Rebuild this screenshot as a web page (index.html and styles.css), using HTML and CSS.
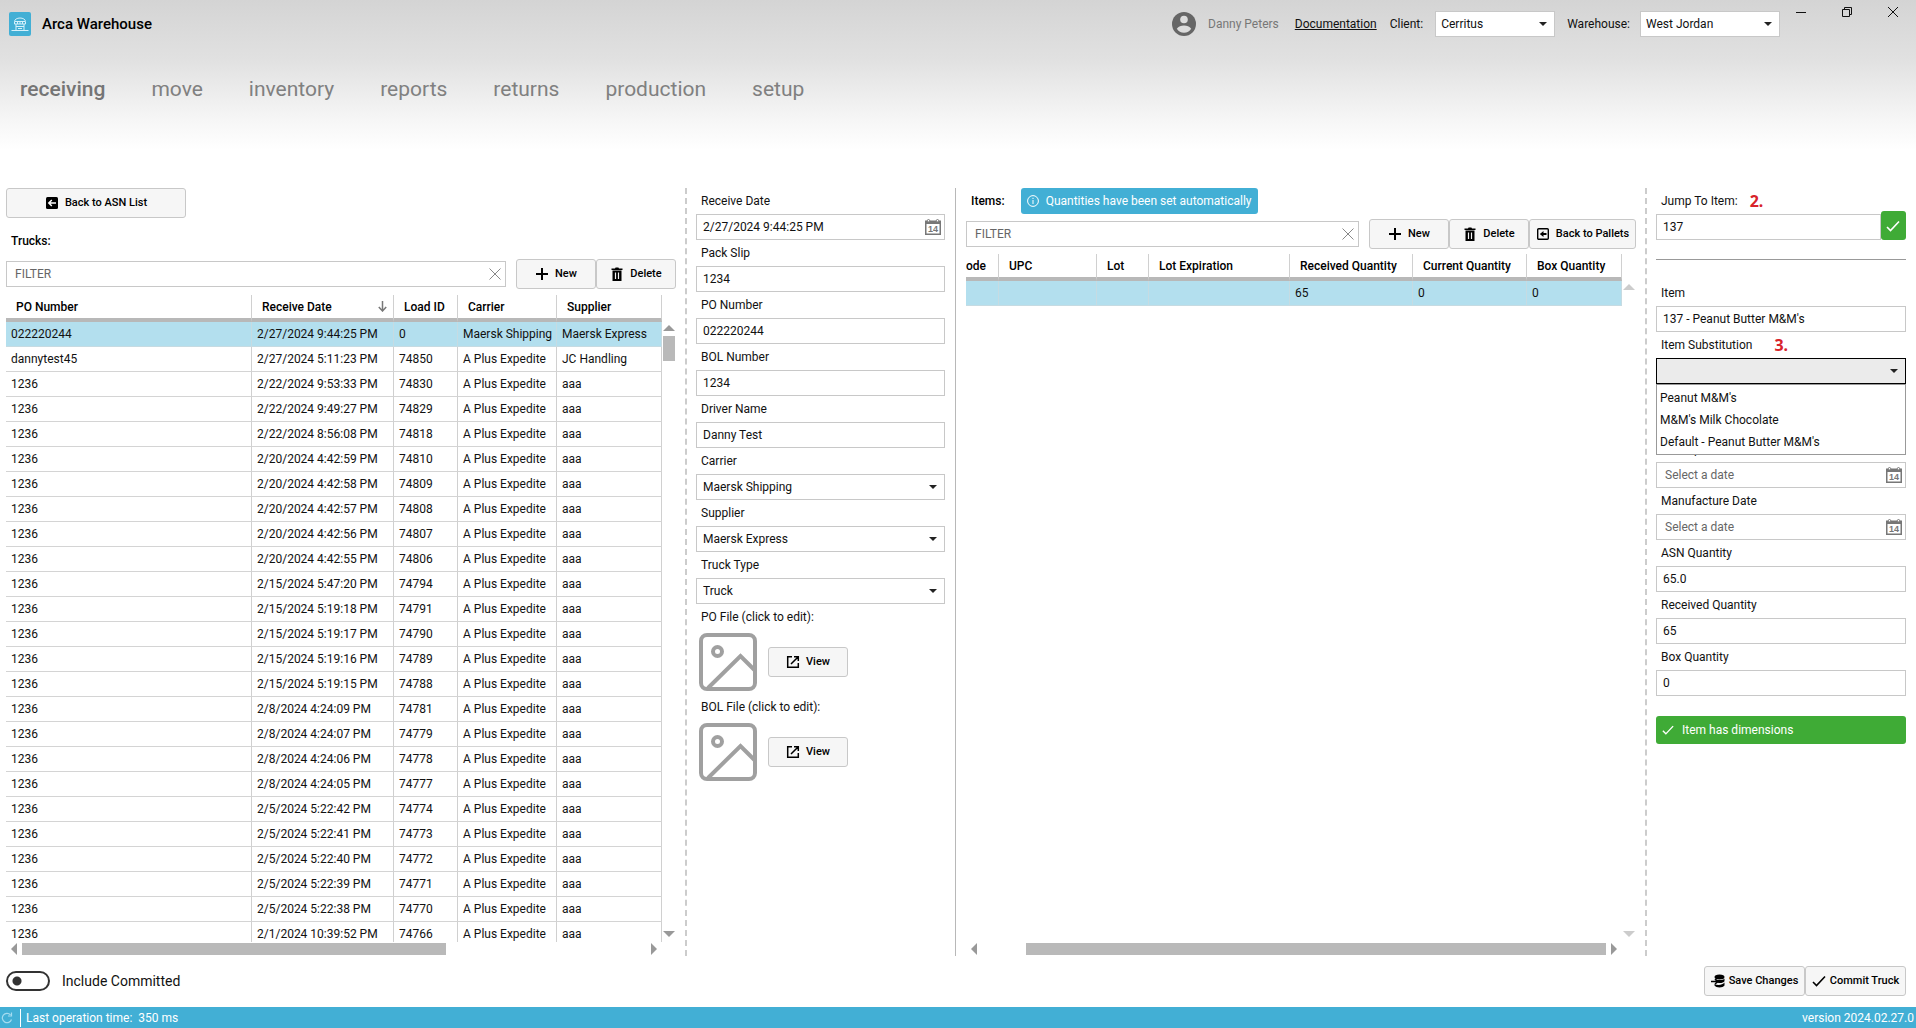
FILE: index.html
```html
<!DOCTYPE html>
<html lang="en">
<head>
<meta charset="utf-8">
<title>Arca Warehouse</title>
<link rel="stylesheet" href="styles.css">
</head>
<body>
<svg class="defs" aria-hidden="true">
  <symbol id="plus" viewBox="0 0 14 14"><path d="M7 1v12M1 7h12" stroke="currentColor" stroke-width="2" fill="none"/></symbol>
  <symbol id="trash" viewBox="0 0 14 14"><path d="M1.500 1.500H5L5.600.5h2.800l.6 1h3.500V3h-11zM2.500 3.500h9V14h-9z" fill="currentColor"/><path d="M5.500 5.500v6.500M8.500 5.500v6.500" stroke="#f5f5f5" stroke-width="1.200"/></symbol>
  <symbol id="clear" viewBox="0 0 12 12"><path d="M.5.5l11 11M11.500.5l-11 11" stroke="currentColor" fill="none"/></symbol>
  <symbol id="cal" viewBox="0 0 16 16"><path d="M.75 3.500h14.500v11.750H.75z" fill="none" stroke="currentColor" stroke-width="1.500"/><path d="M0 1.500h16V5H0z" fill="currentColor"/><circle cx="3.500" cy="1.700" r="1.200" fill="#fff" stroke="currentColor"/><circle cx="12.500" cy="1.700" r="1.200" fill="#fff" stroke="currentColor"/><text x="8" y="13" text-anchor="middle" font-size="9" font-weight="700" font-family="Liberation Sans, sans-serif" fill="currentColor">14</text></symbol>
  <symbol id="image" viewBox="0 0 58 58"><rect x="2" y="2" width="54" height="54" rx="6" fill="none" stroke="currentColor" stroke-width="4"/><circle cx="18.500" cy="18.500" r="4.500" fill="none" stroke="currentColor" stroke-width="4"/><path d="M9 55L41.500 23 56 37.500" fill="none" stroke="currentColor" stroke-width="4"/></symbol>
  <symbol id="open" viewBox="0 0 14 14"><path d="M6 1.700H1.700v10.600h10.600V8M8 1.700h4.300V6M12.300 1.700L5 9" fill="none" stroke="currentColor" stroke-width="1.500"/></symbol>
  <symbol id="check" viewBox="0 0 14 14"><path d="M1 8l3.500 3.500L13 2.500" fill="none" stroke="currentColor" stroke-width="1.600"/></symbol>
</svg>

<header class="top">
  <div class="titlebar">
    <svg class="logo" viewBox="0 0 22 24"><rect width="22" height="24" rx="2" fill="#42afd5"/><path d="M5.500 12V9.500a5.500 3.500 0 0 1 11 0V12zM6 9.500h10M8.500 9.500V12M11 9.500V12M13.500 9.500V12M7 12v6M15 12v6M7 14.500h8M9 16.500h4M2.500 18.500h17" fill="none" stroke="#d6f1fb" stroke-width="1"/></svg>
    <h1 class="app-name">Arca Warehouse</h1>
    <svg class="avatar" viewBox="0 0 24 24"><circle cx="12" cy="12" r="12" fill="#666"/><circle cx="12" cy="7.500" r="3.800" fill="#dcdcdc"/><path d="M4.800 16.800C6.500 14.400 9 13.600 12 13.600s5.500.8 7.200 3.200A8.700 8.700 0 0 1 12 20.700a8.700 8.700 0 0 1-7.200-3.900z" fill="#dcdcdc"/></svg>
    <span class="user">Danny Peters</span>
    <a class="docs" href="#docs">Documentation</a>
    <label for="client">Client:</label>
    <div class="select client"><select id="client"><option>Cerritus</option></select></div>
    <label for="warehouse">Warehouse:</label>
    <div class="select warehouse"><select id="warehouse"><option>West Jordan</option></select></div>
    <div class="window-buttons">
      <button type="button" aria-label="Minimize"><svg viewBox="0 0 12 12"><path d="M1 6.500h10" stroke="#111"/></svg></button>
      <button type="button" aria-label="Restore"><svg viewBox="0 0 12 12"><path d="M1.500 3.500h7v7h-7zM3.500 3.500v-2h7v7h-2" fill="none" stroke="#111"/></svg></button>
      <button type="button" aria-label="Close"><svg viewBox="0 0 12 12"><path d="M1 1l10 10M11 1L1 11" stroke="#111"/></svg></button>
    </div>
  </div>
  <nav class="nav">
    <a class="active" href="#receiving">receiving</a>
    <a href="#move">move</a>
    <a href="#inventory">inventory</a>
    <a href="#reports">reports</a>
    <a href="#returns">returns</a>
    <a href="#production">production</a>
    <a href="#setup">setup</a>
  </nav>
</header>

<main class="panels">
  <section class="trucks">
    <button class="btn back" type="button"><svg class="icon" viewBox="0 0 14 14"><rect x="1" y="1" width="12" height="12" rx="1.500"/><path d="M11 7H4M6.800 4L3.800 7l3 3" fill="none" stroke="#fff" stroke-width="1.500"/></svg>Back to ASN List</button>
    <h2 class="section-title">Trucks:</h2>
    <div class="toolbar">
      <div class="filter"><input type="text" placeholder="FILTER" aria-label="Filter trucks"><svg class="clear"><use href="#clear"/></svg></div>
      <div class="buttons">
        <button class="btn" type="button"><svg class="icon"><use href="#plus"/></svg>New</button>
        <button class="btn" type="button"><svg class="icon"><use href="#trash"/></svg>Delete</button>
      </div>
    </div>
    <div class="grid">
      <div class="viewport">
        <table>
          <colgroup><col><col class="w-date"><col class="w-load"><col class="w-carrier"><col class="w-supplier"></colgroup>
          <thead><tr><th>PO Number</th><th><span class="sorted">Receive Date<svg class="sort" viewBox="0 0 9 11"><path d="M4.500 0v10M.8 6l3.700 4 3.700-4" fill="none" stroke="#777" stroke-width="1.500"/></svg></span></th><th>Load ID</th><th>Carrier</th><th>Supplier</th></tr></thead>
          <tbody>
            <tr class="selected"><td>022220244</td><td>2/27/2024 9:44:25 PM</td><td>0</td><td>Maersk Shipping</td><td>Maersk Express</td></tr>
            <tr><td>dannytest45</td><td>2/27/2024 5:11:23 PM</td><td>74850</td><td>A Plus Expedite</td><td>JC Handling</td></tr>
            <tr><td>1236</td><td>2/22/2024 9:53:33 PM</td><td>74830</td><td>A Plus Expedite</td><td>aaa</td></tr>
            <tr><td>1236</td><td>2/22/2024 9:49:27 PM</td><td>74829</td><td>A Plus Expedite</td><td>aaa</td></tr>
            <tr><td>1236</td><td>2/22/2024 8:56:08 PM</td><td>74818</td><td>A Plus Expedite</td><td>aaa</td></tr>
            <tr><td>1236</td><td>2/20/2024 4:42:59 PM</td><td>74810</td><td>A Plus Expedite</td><td>aaa</td></tr>
            <tr><td>1236</td><td>2/20/2024 4:42:58 PM</td><td>74809</td><td>A Plus Expedite</td><td>aaa</td></tr>
            <tr><td>1236</td><td>2/20/2024 4:42:57 PM</td><td>74808</td><td>A Plus Expedite</td><td>aaa</td></tr>
            <tr><td>1236</td><td>2/20/2024 4:42:56 PM</td><td>74807</td><td>A Plus Expedite</td><td>aaa</td></tr>
            <tr><td>1236</td><td>2/20/2024 4:42:55 PM</td><td>74806</td><td>A Plus Expedite</td><td>aaa</td></tr>
            <tr><td>1236</td><td>2/15/2024 5:47:20 PM</td><td>74794</td><td>A Plus Expedite</td><td>aaa</td></tr>
            <tr><td>1236</td><td>2/15/2024 5:19:18 PM</td><td>74791</td><td>A Plus Expedite</td><td>aaa</td></tr>
            <tr><td>1236</td><td>2/15/2024 5:19:17 PM</td><td>74790</td><td>A Plus Expedite</td><td>aaa</td></tr>
            <tr><td>1236</td><td>2/15/2024 5:19:16 PM</td><td>74789</td><td>A Plus Expedite</td><td>aaa</td></tr>
            <tr><td>1236</td><td>2/15/2024 5:19:15 PM</td><td>74788</td><td>A Plus Expedite</td><td>aaa</td></tr>
            <tr><td>1236</td><td>2/8/2024 4:24:09 PM</td><td>74781</td><td>A Plus Expedite</td><td>aaa</td></tr>
            <tr><td>1236</td><td>2/8/2024 4:24:07 PM</td><td>74779</td><td>A Plus Expedite</td><td>aaa</td></tr>
            <tr><td>1236</td><td>2/8/2024 4:24:06 PM</td><td>74778</td><td>A Plus Expedite</td><td>aaa</td></tr>
            <tr><td>1236</td><td>2/8/2024 4:24:05 PM</td><td>74777</td><td>A Plus Expedite</td><td>aaa</td></tr>
            <tr><td>1236</td><td>2/5/2024 5:22:42 PM</td><td>74774</td><td>A Plus Expedite</td><td>aaa</td></tr>
            <tr><td>1236</td><td>2/5/2024 5:22:41 PM</td><td>74773</td><td>A Plus Expedite</td><td>aaa</td></tr>
            <tr><td>1236</td><td>2/5/2024 5:22:40 PM</td><td>74772</td><td>A Plus Expedite</td><td>aaa</td></tr>
            <tr><td>1236</td><td>2/5/2024 5:22:39 PM</td><td>74771</td><td>A Plus Expedite</td><td>aaa</td></tr>
            <tr><td>1236</td><td>2/5/2024 5:22:38 PM</td><td>74770</td><td>A Plus Expedite</td><td>aaa</td></tr>
            <tr><td>1236</td><td>2/1/2024 10:39:52 PM</td><td>74766</td><td>A Plus Expedite</td><td>aaa</td></tr>
          </tbody>
        </table>
      </div>
      <div class="vbar"><i class="arrow up"></i><i class="thumb"></i><i class="arrow down"></i></div>
      <div class="hbar"><i class="arrow left"></i><div class="track"><i class="thumb trucks-thumb"></i></div><i class="arrow right"></i></div>
    </div>
  </section>

  <section class="form details">
    <label for="rdate">Receive Date</label>
    <div class="date"><input id="rdate" type="text" value="2/27/2024 9:44:25 PM"><svg class="cal"><use href="#cal"/></svg></div>
    <label for="slip">Pack Slip</label>
    <input id="slip" type="text" value="1234">
    <label for="po">PO Number</label>
    <input id="po" type="text" value="022220244">
    <label for="bol">BOL Number</label>
    <input id="bol" type="text" value="1234">
    <label for="driver">Driver Name</label>
    <input id="driver" type="text" value="Danny Test">
    <label for="carrier">Carrier</label>
    <div class="select"><select id="carrier"><option>Maersk Shipping</option></select></div>
    <label for="supplier">Supplier</label>
    <div class="select"><select id="supplier"><option>Maersk Express</option></select></div>
    <label for="ttype">Truck Type</label>
    <div class="select"><select id="ttype"><option>Truck</option></select></div>
    <div class="file">
      <span class="caption">PO File (click to edit):</span>
      <div class="file-row"><button class="picture" type="button" aria-label="Edit PO file"><svg><use href="#image"/></svg></button><button class="btn" type="button"><svg class="icon"><use href="#open"/></svg>View</button></div>
    </div>
    <div class="file">
      <span class="caption">BOL File (click to edit):</span>
      <div class="file-row"><button class="picture" type="button" aria-label="Edit BOL file"><svg><use href="#image"/></svg></button><button class="btn" type="button"><svg class="icon"><use href="#open"/></svg>View</button></div>
    </div>
  </section>

  <section class="items">
    <div class="items-head">
      <h2 class="section-title">Items:</h2>
      <div class="notice"><svg viewBox="0 0 12 12"><circle cx="6" cy="6" r="5.400" fill="none" stroke="#fff"/><path d="M6 5v4M6 2.800v1.200" stroke="#fff"/></svg>Quantities have been set automatically</div>
    </div>
    <div class="toolbar">
      <div class="filter"><input type="text" placeholder="FILTER" aria-label="Filter items"><svg class="clear"><use href="#clear"/></svg></div>
      <div class="buttons">
        <button class="btn" type="button"><svg class="icon"><use href="#plus"/></svg>New</button>
        <button class="btn" type="button"><svg class="icon"><use href="#trash"/></svg>Delete</button>
        <button class="btn pallets" type="button"><svg class="icon" viewBox="0 0 14 14"><rect x="1.700" y="1.700" width="10.600" height="10.600" rx="1" fill="none" stroke="#000" stroke-width="1.400"/><path d="M10.500 7H7" stroke="#000" stroke-width="2"/><path d="M3.800 7l3.700-3v6z"/></svg>Back to Pallets</button>
      </div>
    </div>
    <div class="grid">
      <div class="viewport">
        <table>
          <colgroup><col class="w-code"><col><col class="w-lot"><col class="w-exp"><col class="w-recv"><col class="w-cur"><col class="w-box"></colgroup>
          <thead><tr><th class="cut">ode</th><th>UPC</th><th>Lot</th><th>Lot Expiration</th><th>Received Quantity</th><th>Current Quantity</th><th>Box Quantity</th></tr></thead>
          <tbody><tr class="selected"><td></td><td></td><td></td><td></td><td>65</td><td>0</td><td>0</td></tr></tbody>
        </table>
      </div>
      <div class="vbar idle"><i class="arrow up"></i><i class="arrow down"></i></div>
      <div class="hbar"><i class="arrow left"></i><div class="track"><i class="thumb items-thumb"></i></div><i class="arrow right"></i></div>
    </div>
  </section>

  <section class="form item">
    <label for="jump">Jump To Item:<b class="step">2.</b></label>
    <div class="jump"><input id="jump" type="text" value="137"><button type="button" aria-label="Go"><svg><use href="#check"/></svg></button></div>
    <hr>
    <label for="item">Item</label>
    <input id="item" type="text" value="137 - Peanut Butter M&amp;M's">
    <label for="sub">Item Substitution<b class="step wide">3.</b></label>
    <div class="select open"><select id="sub"><option></option></select>
      <ul class="menu"><li>Peanut M&amp;M's</li><li>M&amp;M's Milk Chocolate</li><li>Default - Peanut Butter M&amp;M's</li></ul>
    </div>
    <label class="after-menu" for="exp">Lot Expiration</label>
    <div class="date"><input id="exp" type="text" placeholder="Select a date"><svg class="cal"><use href="#cal"/></svg></div>
    <label for="mfg">Manufacture Date</label>
    <div class="date"><input id="mfg" type="text" placeholder="Select a date"><svg class="cal"><use href="#cal"/></svg></div>
    <label for="asn">ASN Quantity</label>
    <input id="asn" type="text" value="65.0">
    <label for="recv">Received Quantity</label>
    <input id="recv" type="text" value="65">
    <label for="box">Box Quantity</label>
    <input id="box" type="text" value="0">
    <div class="ok"><svg><use href="#check"/></svg>Item has dimensions</div>
  </section>
</main>

<div class="actions">
  <label class="toggle"><input type="checkbox">Include Committed</label>
  <div class="buttons">
    <button class="btn save" type="button"><svg class="icon" viewBox="0 0 14 14"><ellipse cx="8.500" cy="3" rx="5" ry="2.500"/><path d="M3.500 4.500c1 2 9 2 10 0v2.700c-1 2-6 2.300-8 1zM13.500 8.500v3c-1.500 2.500-8.500 2.500-10 0v-1.500c3 1.500 8 1.200 10-1.500z"/><path d="M0 7.500h6M4 5l3 2.500L4 10" fill="none" stroke="#000" stroke-width="1.500"/></svg>Save Changes</button>
    <button class="btn commit" type="button"><svg class="icon"><use href="#check"/></svg>Commit Truck</button>
  </div>
</div>

<footer class="status">
  <svg class="refresh" viewBox="0 0 12 12"><path d="M10.500 7.500A4.700 4.700 0 1 1 9.500 2.800M10.500.5v3.500H7" fill="none" stroke="#a5dcf0" stroke-width="1.200"/></svg>
  <span class="time">Last operation time:&nbsp; 350 ms</span>
  <span class="version">version 2024.02.27.0</span>
</footer>
</body>
</html>
```

FILE: styles.css
```css
* { box-sizing: border-box; }
body {
  margin: 0;
  height: 100vh;
  display: flex;
  flex-direction: column;
  background: #fff;
  color: #111;
  font: 12px/16px Roboto, "Noto Sans", sans-serif;
}
input, select, button { font: inherit; color: inherit; margin: 0; }
i { display: block; }
.defs { display: none; }

/* Title bar and navigation */
.top {
  height: 188px;
  flex: none;
  background: linear-gradient(#d4d4d4, #e1e1e1 60px, #f6f6f6 120px, #fff 150px);
}
.titlebar { display: flex; align-items: center; height: 47px; padding-left: 9px; }
.logo { width: 22px; height: 24px; }
.app-name { margin: 0 auto 0 11px; font-size: 15px; line-height: 20px; font-weight: 500; color: #000; }
.avatar { width: 24px; height: 24px; margin-right: 12px; }
.user { color: #777; }
.docs { margin: 0 13px 0 16px; color: #111; }
.client { width: 120px; margin: 0 12px; }
.warehouse { width: 140px; margin-left: 10px; }
.window-buttons { display: flex; align-self: flex-start; margin-left: -2px; }
.window-buttons button { width: 46px; height: 24px; padding: 6px 17px; border: 0; background: none; }
.window-buttons svg { display: block; width: 12px; height: 12px; }
.nav { display: flex; gap: 46px; padding: 30px 20px; }
.nav a { font-size: 21px; line-height: 24px; color: #808080; text-decoration: none; }
.nav .active { font-weight: 500; color: #757575; }

/* Controls */
input[type="text"], select {
  width: 100%;
  height: 26px;
  padding: 0 6px;
  border: 1px solid #c8c8c8;
  border-radius: 0;
  background: #fff;
  appearance: none;
  outline: none;
}
.titlebar select { padding: 0 5px; }
input::placeholder { color: #666; opacity: 1; }
.filter input, .date input:placeholder-shown { padding: 0 8px; }
.select { position: relative; }
.select::after {
  content: "";
  position: absolute;
  top: 11px;
  right: 8px;
  border: solid transparent;
  border-width: 4px 4px 0;
  border-top-color: #222;
}
.btn {
  display: flex;
  align-items: center;
  justify-content: center;
  gap: 6px;
  width: 80px;
  height: 30px;
  padding: 0;
  border: 1px solid #c8c8c8;
  border-radius: 3px;
  background: #f6f6f6;
  color: #000;
  font-size: 11px;
  font-weight: 500;
  white-space: nowrap;
}
.icon { width: 14px; height: 14px; flex: none; }
.buttons { display: flex; }
.section-title { margin: 0; font-size: 12px; line-height: 16px; font-weight: 500; color: #000; }

/* Panels */
.panels {
  flex: 1;
  min-height: 0;
  margin-bottom: 10px;
  display: grid;
  grid-template-columns: minmax(0, 685fr) 271px minmax(0, 689fr) 271px;
}
.trucks { display: flex; flex-direction: column; min-height: 0; padding: 0 9px 0 6px; }
.back { width: 180px; margin-bottom: 15px; }
.trucks .section-title { padding-left: 5px; }
.trucks .toolbar { margin: 10px 0 6px; }
.toolbar { display: flex; align-items: center; gap: 10px; }
.filter { position: relative; flex: 1; }
.filter svg { position: absolute; right: 5px; top: 7px; width: 12px; height: 12px; color: #888; }

/* Data grids */
.grid { flex: 1; min-height: 0; display: grid; grid-template: minmax(0, 1fr) 14px / minmax(0, 1fr) 14px; }
.viewport { overflow: hidden; }
table { width: 100%; table-layout: fixed; border-collapse: separate; border-spacing: 0; }
th, td { height: 25px; padding: 0 5px; text-align: left; white-space: nowrap; border-right: 1px solid #d0d0d0; overflow: hidden; }
th { padding: 0 10px; height: 27px; border-bottom: 4px solid #b8b8b8; font-weight: 500; color: #000; }
th.cut { padding: 0; }
.selected td { background: #b3dfee; border-color: #c6dbe2; }
td { border-bottom: 1px solid #d4d4d4; }
.sorted { display: flex; align-items: center; justify-content: space-between; }
.sort { width: 9px; height: 11px; margin-right: -4px; }
.w-date { width: 142px; }
.w-load { width: 64px; }
.w-carrier { width: 99px; }
.w-supplier { width: 105px; }
.w-code { width: 33px; }
.w-lot { width: 52px; }
.w-exp { width: 141px; }
.w-recv { width: 123px; }
.w-cur { width: 114px; }
.w-box { width: 95px; }

.arrow { border: 6px solid transparent; }
.up { border-top: 0; border-bottom-color: #999; }
.down { border-bottom: 0; border-top-color: #999; }
.left { border-left: 0; border-right-color: #999; }
.right { border-right: 0; border-left-color: #999; }
.thumb { background: #b9b9b9; }
.vbar { display: flex; flex-direction: column; align-items: center; gap: 5px; padding: 30px 0 5px; }
.vbar .thumb { width: 12px; height: 25px; }
.vbar .down { margin-top: auto; }
.idle .up { border-bottom-color: #ccc; }
.idle .down { border-top-color: #ccc; }
.hbar { display: flex; align-items: center; gap: 5px; padding: 0 5px 0 5px; }
.track { flex: 1; }
.track .thumb { height: 12px; }
.trucks-thumb { width: 68%; }
.items-thumb { width: 93%; margin-left: auto; }

/* Forms */
.form { display: flex; flex-direction: column; padding: 0 10px 0 9px; }
.form > label, .caption { display: flex; align-items: center; height: 26px; padding: 0 5px; }
.details { border-left: 2px dashed #ccc; border-right: 1px solid #b8b8b8; }
.item { border-left: 2px dashed #ccc; }
.form select, .form input { display: block; }
.date { position: relative; }
.date svg { position: absolute; top: 5px; right: 4px; width: 16px; height: 16px; color: #777; }
.file-row { display: flex; align-items: center; gap: 11px; padding: 3px; }
.picture { padding: 0; border: 0; background: none; }
.picture svg { display: block; width: 58px; height: 58px; color: #a0a0a0; }

.items { display: flex; flex-direction: column; min-height: 0; padding: 0 9px 0 10px; }
.items-head { display: flex; align-items: center; gap: 16px; padding-left: 5px; margin-bottom: 5px; }
.notice { display: flex; align-items: center; gap: 7px; height: 26px; padding: 0 6px; border-radius: 3px; background: #42afd5; color: #fff; }
.notice svg { width: 12px; height: 12px; }
.items .toolbar { margin-bottom: 5px; }
.pallets { width: 107px; }

.form .step { margin-left: 12px; font: 700 16px/16px "Noto Sans", sans-serif; color: #d8232a; }
.form .wide { margin-left: 22px; }
.jump { display: flex; align-items: flex-end; }
.jump button { width: 25px; height: 29px; flex: none; margin-top: -3px; padding: 0 5px; border: 0; border-radius: 3px; background: #3fab36; color: #fff; }
.jump svg { display: block; width: 14px; height: 14px; }
hr { width: 100%; margin: 19px 0 20px; border: 0; border-top: 1px solid #999; }
.open select { border-color: #000; background: #ebebeb; }
.menu {
  position: absolute;
  z-index: 1;
  top: 26px;
  left: 0;
  right: 0;
  margin: 0;
  padding: 2px 3px 1px;
  border: 1px solid #999;
  background: #fff;
  list-style: none;
}
.menu li { line-height: 22px; }
.item .after-menu { margin-top: 52px; }
.ok { display: flex; align-items: center; gap: 8px; height: 28px; margin-top: 20px; padding: 0 6px; border-radius: 3px; background: #3fab36; color: #fff; }
.ok svg { width: 12px; height: 12px; }

/* Footer */
.actions { display: flex; justify-content: space-between; align-items: center; padding: 0 10px 11px 6px; }
.toggle { display: flex; align-items: center; gap: 12px; font-size: 14px; }
.toggle input {
  appearance: none;
  width: 44px;
  height: 20px;
  margin: 0;
  border: 2px solid #333;
  border-radius: 10px;
  background: radial-gradient(circle at 9px 8px, #333 4px, #fff 5px);
}
.save, .commit { width: 101px; gap: 4px; }
.status { display: flex; align-items: center; height: 21px; padding-right: 2px; background: #42afd5; color: #fff; }
.refresh { width: 12px; height: 12px; margin: 0 7px 0 1px; }
.time { padding-left: 5px; line-height: 18px; border-left: 1px solid #fff; }
.version { margin-left: auto; }
```
